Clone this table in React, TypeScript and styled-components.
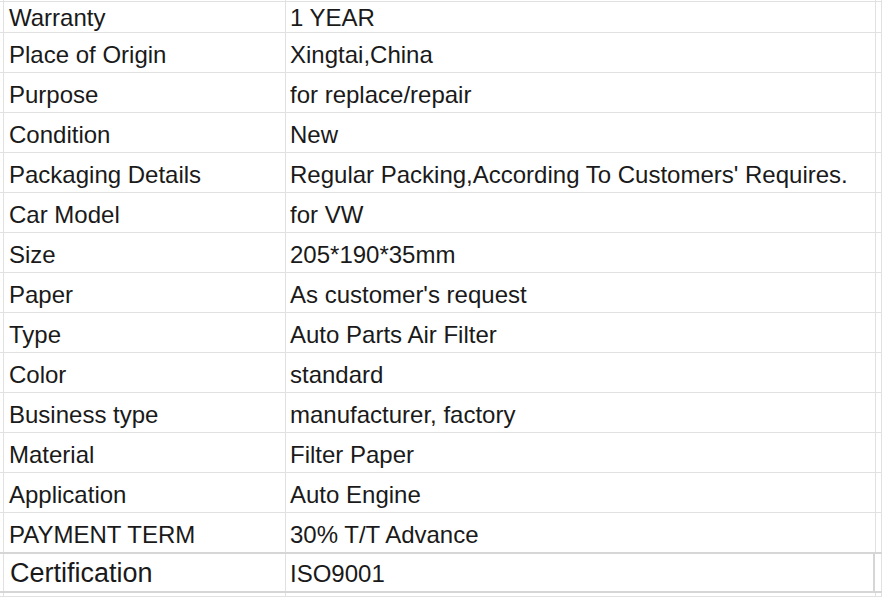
import React from "react";
import styled, { createGlobalStyle } from "styled-components";

const GlobalStyle = createGlobalStyle`
  html, body {
    margin: 0;
    padding: 0;
    background: #ffffff;
  }
  body {
    font-family: "Liberation Sans", Arial, sans-serif;
    overflow: hidden;
  }
`;

const LINE = "#e1e1e1";
const STRONG = "#d6d6d6";

const Sheet = styled.div`
  width: 882px;
  height: 597px;
  overflow: hidden;
  display: flex;
  flex-direction: column;
  color: #1a1a1a;
`;

const Row = styled.div<{ $h: number; $strong?: boolean }>`
  display: flex;
  flex: none;
  height: ${(p) => p.$h}px;
  border-bottom: ${(p) => (p.$strong ? `2px solid ${STRONG}` : `1px solid ${LINE}`)};
  ${(p) => (p.$strong ? `border-top: 2px solid ${STRONG}; margin-top: -1px;` : "")}
`;

const Stub = styled.div`
  flex: none;
  width: 3px;
  border-right: 1px solid ${LINE};
`;

const Cell = styled.div<{ $w: number; $big?: boolean; $pad: number; $top?: number; $strongRight?: boolean }>`
  flex: none;
  box-sizing: border-box;
  width: ${(p) => p.$w}px;
  padding-left: ${(p) => p.$pad}px;
  padding-top: ${(p) => p.$top ?? 0}px;
  display: flex;
  align-items: center;
  border-right: ${(p) => (p.$strongRight ? `2px solid ${STRONG}` : `1px solid ${LINE}`)};
  font-size: ${(p) => (p.$big ? "27px" : "24px")};
  white-space: nowrap;
  overflow: hidden;
`;

const Tail = styled.div`
  flex: 1;
  border-right: 1px solid ${LINE};
`;

const rows: [string, string][] = [
  ["Warranty", "1 YEAR"],
  ["Place of Origin", "Xingtai,China"],
  ["Purpose", "for replace/repair"],
  ["Condition", "New"],
  ["Packaging Details", "Regular Packing,According To Customers' Requires."],
  ["Car Model", "for VW"],
  ["Size", "205*190*35mm"],
  ["Paper", "As customer's request"],
  ["Type", "Auto Parts Air Filter"],
  ["Color", "standard"],
  ["Business type", "manufacturer, factory"],
  ["Material", "Filter Paper"],
  ["Application", "Auto Engine"],
  ["PAYMENT TERM", "30% T/T Advance"],
];

export default function App() {
  return (
    <>
      <GlobalStyle />
      <Sheet>
        <Row $h={1}>
          <Stub />
          <Cell $w={282} $pad={0} />
          <Cell $w={590} $pad={0} />
          <Tail />
        </Row>
        {rows.map(([k, v], i) => {
          const top = i === 0 ? 2 : 4;
          return (
            <Row key={k} $h={i === 0 ? 30 : 39}>
              <Stub />
              <Cell $w={282} $pad={5} $top={top}>{k}</Cell>
              <Cell $w={590} $pad={4} $top={top}>{v}</Cell>
              <Tail />
            </Row>
          );
        })}
        <Row $h={37} $strong>
          <Stub />
          <Cell $w={282} $pad={6} $top={2} $big>Certification</Cell>
          <Cell $w={589} $pad={4} $top={2} $strongRight>ISO9001</Cell>
          <Tail />
        </Row>
        <Row $h={3}>
          <Stub />
          <Cell $w={282} $pad={0} />
          <Cell $w={590} $pad={0} />
          <Tail />
        </Row>
      </Sheet>
    </>
  );
}
